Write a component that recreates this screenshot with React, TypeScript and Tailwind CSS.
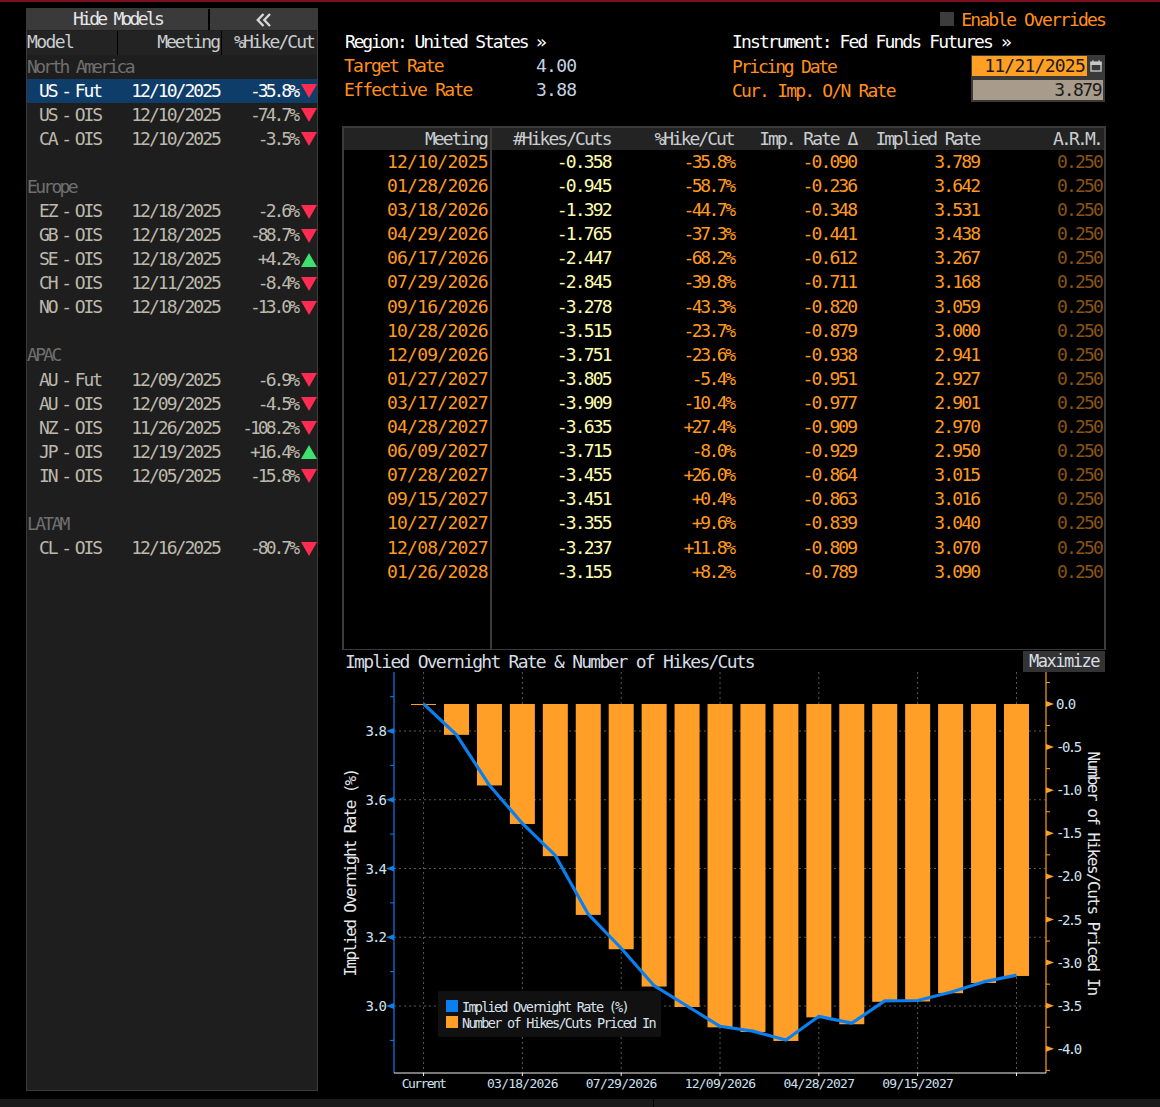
import React from "react";

const groups: { name: string; rows: [string, string, string, boolean][] }[] = [
  { name: "North America", rows: [["US - Fut", "12/10/2025", "-35.8%", false], ["US - OIS", "12/10/2025", "-74.7%", false], ["CA - OIS", "12/10/2025", "-3.5%", false]] },
  { name: "Europe", rows: [["EZ - OIS", "12/18/2025", "-2.6%", false], ["GB - OIS", "12/18/2025", "-88.7%", false], ["SE - OIS", "12/18/2025", "+4.2%", true], ["CH - OIS", "12/11/2025", "-8.4%", false], ["NO - OIS", "12/18/2025", "-13.0%", false]] },
  { name: "APAC", rows: [["AU - Fut", "12/09/2025", "-6.9%", false], ["AU - OIS", "12/09/2025", "-4.5%", false], ["NZ - OIS", "11/26/2025", "-108.2%", false], ["JP - OIS", "12/19/2025", "+16.4%", true], ["IN - OIS", "12/05/2025", "-15.8%", false]] },
  { name: "LATAM", rows: [["CL - OIS", "12/16/2025", "-80.7%", false]] },
];

const table: [string, number, string, string, number][] = [
  ["12/10/2025", -0.358, "-35.8%", "-0.090", 3.789],
  ["01/28/2026", -0.945, "-58.7%", "-0.236", 3.642],
  ["03/18/2026", -1.392, "-44.7%", "-0.348", 3.531],
  ["04/29/2026", -1.765, "-37.3%", "-0.441", 3.438],
  ["06/17/2026", -2.447, "-68.2%", "-0.612", 3.267],
  ["07/29/2026", -2.845, "-39.8%", "-0.711", 3.168],
  ["09/16/2026", -3.278, "-43.3%", "-0.820", 3.059],
  ["10/28/2026", -3.515, "-23.7%", "-0.879", 3.0],
  ["12/09/2026", -3.751, "-23.6%", "-0.938", 2.941],
  ["01/27/2027", -3.805, "-5.4%", "-0.951", 2.927],
  ["03/17/2027", -3.909, "-10.4%", "-0.977", 2.901],
  ["04/28/2027", -3.635, "+27.4%", "-0.909", 2.97],
  ["06/09/2027", -3.715, "-8.0%", "-0.929", 2.95],
  ["07/28/2027", -3.455, "+26.0%", "-0.864", 3.015],
  ["09/15/2027", -3.451, "+0.4%", "-0.863", 3.016],
  ["10/27/2027", -3.355, "+9.6%", "-0.839", 3.04],
  ["12/08/2027", -3.237, "+11.8%", "-0.809", 3.07],
  ["01/26/2028", -3.155, "+8.2%", "-0.789", 3.09],
];

const columns: { head: string; width: string; color: string; values: string[]; extra?: string; headTrack: string; valTrack: string; valPad: string }[] = [
  { head: "Meeting", width: "w-[148px]", color: "text-[#ff9a1f]", values: table.map((r) => r[0]), extra: "border-r-2 border-[#3a3a3a]", headTrack: "tracking-[-2px]", valTrack: "tracking-[-0.75px]", valPad: "pr-0.5" },
  { head: "#Hikes/Cuts", width: "w-[122px]", color: "text-[#ffffb0]", values: table.map((r) => r[1].toFixed(3)), headTrack: "tracking-[-1.95px]", valTrack: "tracking-[-1.85px]", valPad: "pr-[3px]" },
  { head: "%Hike/Cut", width: "w-[123px]", color: "text-[#ff9a1f]", values: table.map((r) => r[2]), headTrack: "tracking-[-2.05px]", valTrack: "tracking-[-2.5px]", valPad: "pr-[3px]" },
  { head: "Imp. Rate Δ", width: "w-[123px]", color: "text-[#ff9a1f]", values: table.map((r) => r[3]), headTrack: "tracking-[-2px]", valTrack: "tracking-[-1.85px]", valPad: "pr-[3px]" },
  { head: "Implied Rate", width: "w-[123px]", color: "text-[#ff9a1f]", values: table.map((r) => r[4].toFixed(3)), headTrack: "tracking-[-2.2px]", valTrack: "tracking-[-1.85px]", valPad: "pr-[3px]" },
  { head: "A.R.M.", width: "w-[122px]", color: "text-[#8a5412]", values: table.map(() => "0.250"), headTrack: "tracking-[-2.85px]", valTrack: "tracking-[-1.85px]", valPad: "pr-0.5" },
];

function Triangle({ up }: { up: boolean }) {
  return (
    <svg width="16" height="14" viewBox="0 0 16 14" className="shrink-0">
      {up ? <polygon points="8,0 16,14 0,14" fill="#3fe06f" /> : <polygon points="0,0 16,0 8,14" fill="#ff2b50" />}
    </svg>
  );
}

function ModelRow({ row, selected }: { row: [string, string, string, boolean]; selected?: boolean }) {
  return (
    <div className={`flex h-[24.1px] items-center ${selected ? "bg-[#0f3d6a] text-white" : "text-[#bdb9ad]"}`}>
      <div className="w-[90px] pl-3 pb-[2px] whitespace-pre tracking-[-2.1px] [word-spacing:-4px]">{row[0]}</div>
      <div className="w-[105px] text-right pr-[2px] pb-[2px]">{row[1]}</div>
      <div className="w-[78px] text-right pr-[3px] pb-[2px] tracking-[-3px]">{row[2]}</div>
      <div className="w-[17px] flex justify-end"><Triangle up={row[3]} /></div>
    </div>
  );
}

function LeftPanel() {
  return (
    <aside className="w-[292px] h-[1083px] mt-[6px] bg-[#1e1e1e] border border-[#3a3a3a] shrink-0 flex flex-col tracking-[-1.95px]">
      <div className="flex h-[21px] bg-black gap-0.5 shrink-0">
        <div className="w-[181px] bg-[#3a3a3a] text-[#e6e6e6] text-center leading-[19px] tracking-[-2.75px]">Hide Models</div>
        <div className="flex-1 bg-[#3a3a3a] flex items-center justify-center">
          <svg width="16" height="14" viewBox="0 0 16 14" fill="none" stroke="#d8d8d8" strokeWidth="2.4">
            <path d="M7.5 1 L1.8 7 L7.5 13 M14 1 L8.3 7 L14 13" />
          </svg>
        </div>
      </div>
      <div className="flex h-[24px] mt-[1px] shrink-0 bg-[#232323] text-[#c9cdd0] leading-[22px]">
        <div className="w-[91px] border-r border-black tracking-[-1.6px]">Model</div>
        <div className="w-[104px] text-right border-r border-black pr-0.5 tracking-[-2px]">Meeting</div>
        <div className="flex-1 text-right pr-[3px]">%Hike/Cut</div>
      </div>
      {groups.map((g, gi) => (
        <div key={g.name} className={gi === groups.length - 1 ? "" : "mb-[24px]"}>
          <div className="h-[24.1px] flex items-center pb-[2px] text-[#6f6f6f] tracking-[-2.7px]">{g.name}</div>
          {g.rows.map((r, i) => (
            <ModelRow key={r[0] + i} row={r} selected={gi === 0 && i === 0} />
          ))}
        </div>
      ))}
    </aside>
  );
}

function Info() {
  return (
    <section className="h-[124px] flex flex-col pt-[6px] shrink-0">
      <div className="flex justify-end items-center h-[22px] pr-px text-[#ff8f1a]">
        <span className="w-[14px] h-[14px] bg-[#3c3c3c] mr-[7px]" />
        <span>Enable Overrides</span>
      </div>
      <div className="flex">
        <div className="w-[390px] pl-[3px]">
          <div className="h-[24px] leading-[24px] text-white tracking-[-2.15px]">Region: United States »</div>
          <div className="h-[24px] leading-[24px] text-[#ff8f1a] flex -ml-px tracking-[-1.85px]"><span className="w-[192px]">Target Rate</span><span className="text-[#c5d2e0] tracking-[-0.75px]">4.00</span></div>
          <div className="h-[24px] leading-[24px] text-[#ff8f1a] flex -ml-px tracking-[-1.72px]"><span className="w-[192px]">Effective Rate</span><span className="text-[#c5d2e0] tracking-[-0.75px]">3.88</span></div>
        </div>
        <div className="flex-1">
          <div className="h-[24px] leading-[24px] text-white tracking-[-1.87px]">Instrument: Fed Funds Futures »</div>
          <div className="h-[24px] flex items-center text-[#ff8f1a]">
            <span className="w-[239px] tracking-[-2.2px]">Pricing Date</span>
            <div className="w-[134px] h-[23px] flex bg-[#3a3a3a] p-px pb-0.5">
              <span className="w-[115px] bg-[#ff9f24] text-[#1a1a1a] text-right pr-0.5 leading-[20px] tracking-[-0.75px]">11/21/2025</span>
              <span className="flex-1 flex items-center justify-center">
                <svg width="12" height="12" viewBox="0 0 12 12" fill="none" stroke="#c8c8c8"><rect x="1" y="2.5" width="10" height="8.5" strokeWidth="1.4" /><rect x="1" y="2" width="10" height="2.5" fill="#c8c8c8" /><path d="M3 0v2M9 0v2" /></svg>
              </span>
            </div>
          </div>
          <div className="h-[24px] flex items-center text-[#ff8f1a]">
            <span className="w-[239px] tracking-[-1.8px]">Cur. Imp. O/N Rate</span>
            <div className="w-[134px] h-[24px] bg-[#a89b8b] border-2 border-[#3a3a3a] text-[#1c1c1c] text-right pr-0.5 leading-[20px] tracking-[-1.5px]">3.879</div>
          </div>
        </div>
      </div>
    </section>
  );
}

function RateTable() {
  return (
    <section className="h-[524px] w-[764px] border-2 border-[#3a3a3a] border-b flex shrink-0">
      {columns.map((c) => (
        <div key={c.head} className={`${c.width} h-full flex flex-col ${c.extra ?? ""}`}>
          <div className={`h-[22px] shrink-0 bg-[#232323] text-[#c9cdd0] text-right pr-[3px] leading-[21px] whitespace-pre ${c.headTrack}`}>{c.head}</div>
          <div className={`${c.color} text-right ${c.valPad} ${c.valTrack}`}>
            {c.values.map((v, i) => (
              <div key={i} className="h-[24.1px] leading-[24px]">{v}</div>
            ))}
          </div>
        </div>
      ))}
    </section>
  );
}

const OX = 342;
const OY = 672;
const AL = 394 - OX;
const AR = 1046 - OX;
const AB = 1073 - OY;
const bx = (i: number) => 456.5 + i * 32.94 - OX;
const ry = (r: number) => 731 + (3.8 - r) * 343.75 - OY;
const hy = (h: number) => 704 - h * 86.2 - OY;
const BLUE = "#0a80f0";
const ORANGE = "#ff9f28";
const LABEL = "#cfe0f2";

function Chart() {
  const xTicks: [number, string][] = [
    [bx(-1), "Current"],
    [bx(2), "03/18/2026"],
    [bx(5), "07/29/2026"],
    [bx(8), "12/09/2026"],
    [bx(11), "04/28/2027"],
    [bx(14), "09/15/2027"],
    [bx(17), ""],
  ];
  const line = [[bx(-1), ry(3.879)], ...table.map((r, i) => [bx(i), ry(r[4])])].map((p) => p.join(",")).join(" ");
  const fam = "'DejaVu Sans Mono', monospace";
  return (
    <svg width="764" height="425" viewBox="0 0 764 425" className="block shrink-0" fontFamily={fam}>
      {[3.8, 3.6, 3.4, 3.2, 3.0].map((v) => (
        <line key={v} x1={AL} x2={AR} y1={ry(v)} y2={ry(v)} stroke="#5a5a5a" strokeDasharray="2 3" />
      ))}
      {xTicks.map(([x]) => (
        <line key={x} x1={x} x2={x} y1={0} y2={AB} stroke="#5a5a5a" strokeDasharray="2 3" />
      ))}
      <rect x={bx(-1) - 12.5} y={hy(0)} width={25} height={1} fill={ORANGE} />
      {table.map((r, i) => (
        <rect key={i} x={bx(i) - 12.5} y={hy(0)} width={25} height={hy(r[1]) - hy(0)} fill={ORANGE} />
      ))}
      <polyline points={line} fill="none" stroke={BLUE} strokeWidth="3.2" strokeLinejoin="round" />
      <line x1={AL} x2={AL} y1={0} y2={AB} stroke={BLUE} strokeWidth="1.2" />
      <line x1={AR} x2={AR} y1={0} y2={AB} stroke={ORANGE} strokeWidth="1.2" />
      <line x1={AL} x2={AR} y1={AB} y2={AB} stroke="#f0f0f0" strokeWidth="1.2" />
      {[3.9, 3.7, 3.5, 3.3, 3.1, 2.9].map((v) => (
        <line key={v} x1={AL - 4} x2={AL} y1={ry(v)} y2={ry(v)} stroke={BLUE} />
      ))}
      {[3.8, 3.6, 3.4, 3.2, 3.0].map((v) => (
        <g key={v}>
          <polygon points={`${AL - 8},${ry(v)} ${AL},${ry(v) - 3} ${AL},${ry(v) + 3}`} fill={BLUE} />
          <text x={AL - 9} y={ry(v) + 5} textAnchor="end" fontSize="14" letterSpacing="-1.9" fill={LABEL}>{v.toFixed(1)}</text>
        </g>
      ))}
      {[0.25, -0.25, -0.75, -1.25, -1.75, -2.25, -2.75, -3.25, -3.75, -4.25].map((v) => (
        <line key={v} x1={AR} x2={AR + 4} y1={hy(v)} y2={hy(v)} stroke={ORANGE} />
      ))}
      {[0, -0.5, -1, -1.5, -2, -2.5, -3, -3.5, -4].map((v) => (
        <g key={v}>
          <polygon points={`${AR + 8},${hy(v)} ${AR},${hy(v) - 3} ${AR},${hy(v) + 3}`} fill={ORANGE} />
          <text x={AR + 10} y={hy(v) + 5} fontSize="14" letterSpacing="-2.5" fill={LABEL}>{v === 0 ? "0.0" : v.toFixed(1)}</text>
        </g>
      ))}
      {xTicks.map(([x, t]) => (
        <g key={x}>
          <line x1={x} x2={x} y1={AB} y2={AB + 3} stroke="#f0f0f0" />
          <text x={x} y={AB + 15} textAnchor="middle" fontSize="13" letterSpacing={t === "Current" ? "-1.6" : "-0.75"} fill={LABEL}>{t}</text>
        </g>
      ))}
      <text transform={`translate(14,201) rotate(-90)`} textAnchor="middle" fontSize="16" letterSpacing="-1.67" fill="#e4e8ec">Implied Overnight Rate (%)</text>
      <text transform={`translate(746,201) rotate(90)`} textAnchor="middle" fontSize="16" letterSpacing="-1.53" fill="#e4e8ec">Number of Hikes/Cuts Priced In</text>
      <rect x={96} y={319} width={223} height={46} rx={2} fill="#111111" />
      <rect x={104} y={328} width={12} height={12} fill={BLUE} />
      <rect x={104} y={344} width={12} height={12} fill={ORANGE} />
      <text x={120} y={340} fontSize="13.5" letterSpacing="-1.75" fill="#d8e2ec">Implied Overnight Rate (%)</text>
      <text x={120} y={356} fontSize="13.5" letterSpacing="-1.7" fill="#d8e2ec">Number of Hikes/Cuts Priced In</text>
    </svg>
  );
}

export default function App() {
  return (
    <div className="w-[1160px] h-[1107px] bg-black flex flex-col overflow-hidden font-['DejaVu_Sans_Mono',monospace] text-[18px] tracking-[-1.85px]">
      <div className="h-[2px] bg-[#7c0d1c] shrink-0" />
      <div className="flex flex-1 pl-[26px] min-h-0">
        <LeftPanel />
        <main className="ml-[24px] w-[764px] flex flex-col">
          <Info />
          <RateTable />
          <div className="flex items-center justify-between h-[22px] pl-[3px] shrink-0 text-[#d6dde4] tracking-[-1.75px]">
            <span>Implied Overnight Rate &amp; Number of Hikes/Cuts</span>
            <span className="w-[82px] h-[21px] mr-[1px] bg-[#333333] text-center text-[#d8dde2] leading-[20px] text-[17px] tracking-[-1.48px]">Maximize</span>
          </div>
          <Chart />
        </main>
      </div>
      <div className="h-[8px] bg-[#1a1a1a] shrink-0 flex"><div className="w-[654px] border-r border-black" /></div>
    </div>
  );
}
